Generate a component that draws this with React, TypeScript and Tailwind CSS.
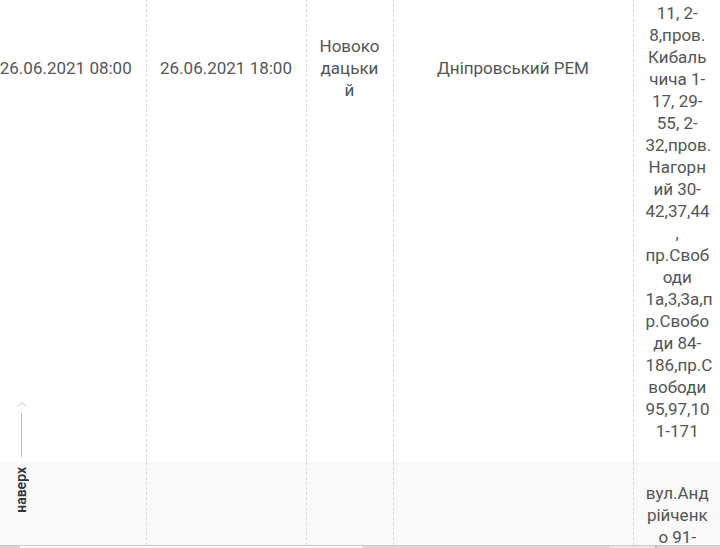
import React from 'react';

const hiddenLines = [
  'вул.Бере',
  'гова 1-',
  '15,вул.',
  'Виногра',
  'дна 2-',
  '24,вул.Г',
  'ончара',
  '3,5,7,вул',
  '.Дніпро',
  'вська 1',
  '-33,пров',
  '.Дачни',
  'й 1-9,',
  'пров.',
];

const row1Lines = [
  '11, 2-',
  '8,пров.',
  'Кибаль',
  'чича 1-',
  '17, 29-',
  '55, 2-',
  '32,пров.',
  'Нагорн',
  'ий 30-',
  '42,37,44',
  ',',
  'пр.Своб',
  'оди',
  '1а,3,3а,п',
  'р.Свобо',
  'ди 84-',
  '186,пр.С',
  'вободи',
  '95,97,10',
  '1-171',
];

const row2Lines = [
  'вул.Анд',
  'рійченк',
  'о 91-',
  '117,вул.',
  'Садова',
  '2-18,вул',
  '.Шевче',
  'нка 4-',
  '26,пров.',
  'Тихий 1-',
  '15,вул.',
  'Лісова',
  '3-41',
];

const Lines = ({ lines }: { lines: string[] }) => (
  <>
    {lines.map((l, i) => (
      <div key={i}>{l}</div>
    ))}
  </>
);

const cell = 'px-[12px] py-5 text-center align-middle';
const dashed = 'border-l border-dashed border-[#d9d9d9]';

export default function App() {
  return (
    <div className="relative h-[548px] w-[720px] overflow-hidden bg-white font-[Roboto,sans-serif] text-[17px] leading-[22px] text-[#555]">
      <div className="h-[545px] overflow-hidden">
        <table className="mt-[-326px] ml-[-14px] w-[735px] table-fixed border-collapse">
          <colgroup>
            <col className="w-[160px]" />
            <col className="w-[160px]" />
            <col className="w-[87px]" />
            <col className="w-[240px]" />
            <col className="w-[88px]" />
          </colgroup>
          <tbody>
            <tr className="bg-white">
              <td className={cell}>26.06.2021 08:00</td>
              <td className={`${cell} ${dashed}`}>26.06.2021 18:00</td>
              <td className={`${cell} ${dashed} px-[4px]`}>
                <Lines lines={['Новоко', 'дацьки', 'й']} />
              </td>
              <td className={`${cell} ${dashed}`}>Дніпровський РЕМ</td>
              <td className={`${cell} ${dashed} px-[4px]`}>
                <Lines lines={[...hiddenLines, ...row1Lines]} />
              </td>
            </tr>
            <tr className="bg-[#f9f9f9]">
              <td className={cell}>26.06.2021 08:00</td>
              <td className={`${cell} ${dashed}`}>26.06.2021 18:00</td>
              <td className={`${cell} ${dashed} px-[4px]`}>
                <Lines lines={['Новоко', 'дацьки', 'й']} />
              </td>
              <td className={`${cell} ${dashed}`}>Дніпровський РЕМ</td>
              <td className={`${cell} ${dashed} px-[4px]`}>
                <Lines lines={row2Lines} />
              </td>
            </tr>
          </tbody>
        </table>
      </div>

      {/* horizontal scrollbar */}
      <div className="flex h-[3px] border-t border-[#cccccc]">
        <div className="w-[20px] bg-[#d4d4d4]" />
        <div className="w-[342px] bg-white" />
        <div className="w-[248px] bg-[#d6d6d6]" />
        <div className="w-[45px] bg-[#e6e6e6]" />
        <div className="w-[2px] bg-[#b5b5b5]" />
        <div className="flex-1 bg-[#d6d6d6]" />
      </div>

      {/* back to top */}
      <a className="absolute left-[6px] top-[401px] flex w-[30px] flex-col items-center">
        <svg width="10" height="6" viewBox="0 0 10 6" className="ml-[1px]">
          <path d="M1 5.5 L5 1.5 L9 5.5" fill="none" stroke="#c4c4c4" strokeWidth="1" />
        </svg>
        <div className="mt-[6px] ml-[1px] h-[44px] w-px bg-[#bdbdbd]" />
        <span className="mt-[10px] rotate-180 text-[14px] font-semibold leading-none text-[#333] [writing-mode:vertical-rl]">
          наверх
        </span>
      </a>
    </div>
  );
}
